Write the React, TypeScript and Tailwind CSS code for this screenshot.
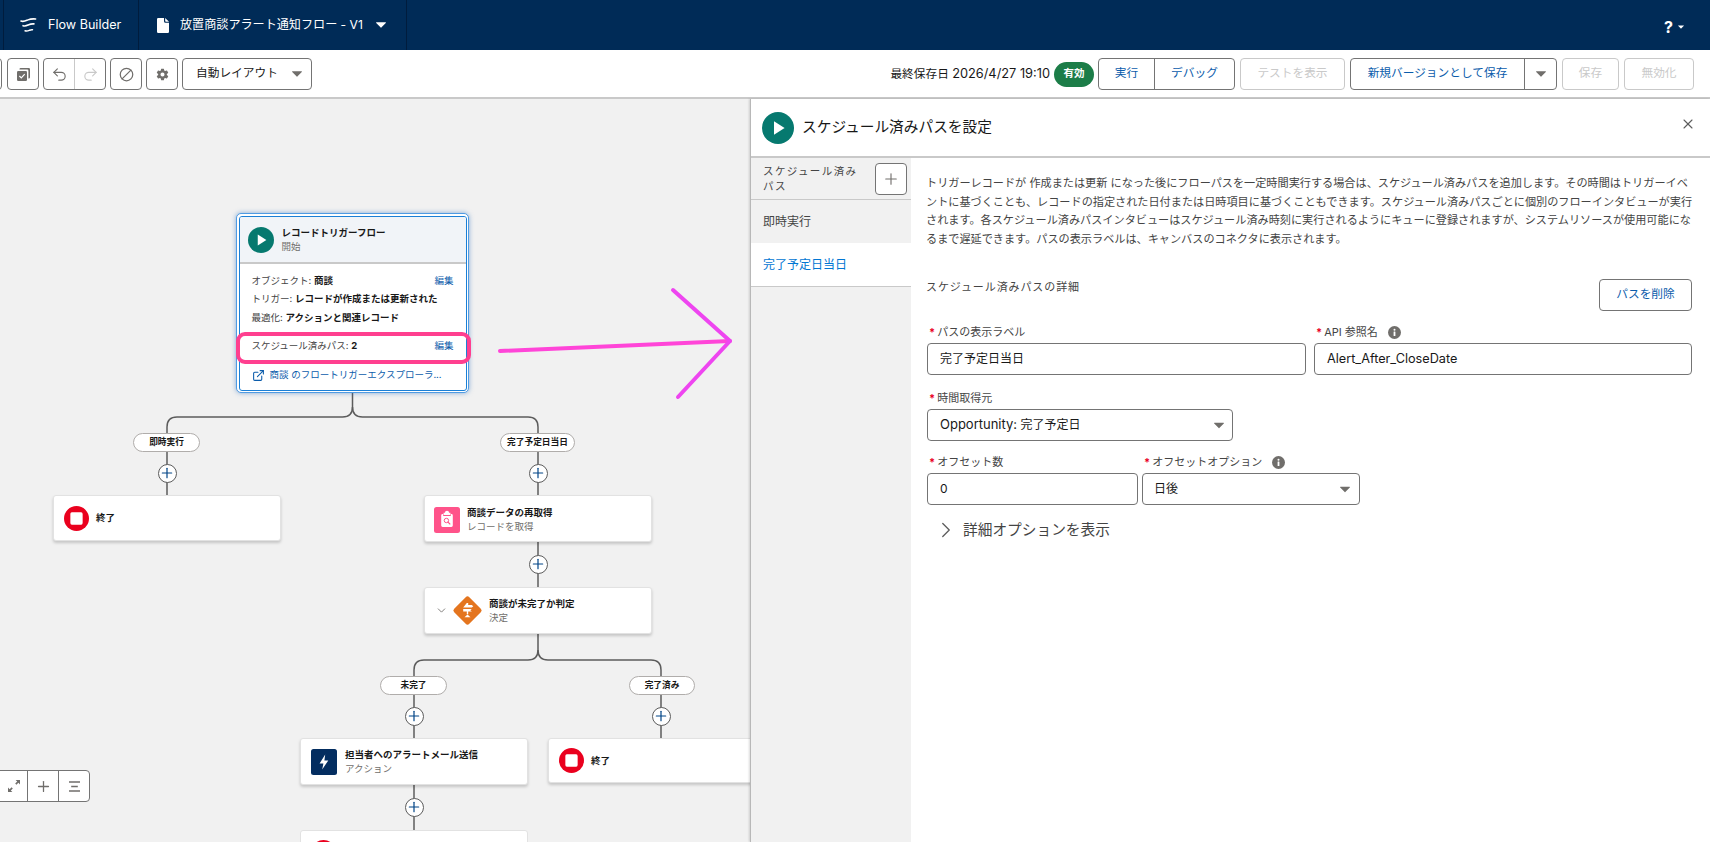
import React from "react";
import { Undo2, Redo2, Ban, Plus, X, ChevronDown, ChevronRight, ExternalLink } from "lucide-react";
import { IoSettingsSharp } from "react-icons/io5";

const Caret = ({ className = "" }: { className?: string }) => (
  <svg viewBox="0 0 10 6" className={className} aria-hidden>
    <path d="M0.5 0.3h9a.4.4 0 0 1 .3.7L5.3 5.6a.4.4 0 0 1-.6 0L.2 1a.4.4 0 0 1 .3-.7z" fill="currentColor" />
  </svg>
);

const PlayBadge = ({ className = "" }: { className?: string }) => (
  <svg viewBox="0 0 32 32" className={className} aria-hidden>
    <circle cx="16" cy="16" r="16" fill="#06796f" />
    <path d="M12 9.2 22.6 16 12 22.8z" fill="#fff" />
  </svg>
);

const EndIcon = () => (
  <svg viewBox="0 0 26 26" className="w-[25px] h-[25px] shrink-0" aria-hidden>
    <circle cx="13" cy="13" r="13" fill="#ea001e" />
    <rect x="6.6" y="6.6" width="12.8" height="12.8" rx="1.6" fill="#fff" />
  </svg>
);

const RecordIcon = () => (
  <svg viewBox="0 0 26 26" className="w-[26px] h-[26px] shrink-0" aria-hidden>
    <rect width="26" height="26" rx="2.5" fill="#ff538a" />
    <path d="M9.6 5.8h1.3a2.1 2.1 0 0 1 4.2 0h1.3v2.1H9.6z" fill="#fff" />
    <path d="M8.6 7h.6v1.9h7.6V7h.6A1.4 1.4 0 0 1 18.8 8.4v10.2a1.4 1.4 0 0 1-1.4 1.4H8.6a1.4 1.4 0 0 1-1.4-1.4V8.4A1.4 1.4 0 0 1 8.6 7z" fill="#fff" />
    <circle cx="12.4" cy="13.5" r="2.2" fill="none" stroke="#ff538a" strokeWidth="1" />
    <path d="m14 15.1 1.9 1.9" stroke="#ff538a" strokeWidth="1.1" strokeLinecap="round" />
  </svg>
);

const DecisionIcon = () => (
  <svg viewBox="0 0 31 31" className="w-[31px] h-[31px] shrink-0" aria-hidden>
    <rect x="4.8" y="4.8" width="21.4" height="21.4" rx="2.6" transform="rotate(45 15.5 15.5)" fill="#e4751f" />
    <path d="M14.8 8h1.4v2h3.6l1.5 1.3-1.5 1.3H11.2zM11.2 14h8.6l-1.5 1.3 1.5 1.3h-3.6v2.6h-1.4v-2.6h-3.6z" fill="#fff" />
    <path d="M15.5 19.6l3 2.6h-6z" fill="#fff" />
  </svg>
);

const ActionIcon = () => (
  <svg viewBox="0 0 26 26" className="w-[26px] h-[26px] shrink-0" aria-hidden>
    <rect width="26" height="26" rx="2.5" fill="#032d60" />
    <path d="M14.2 5.6 8.6 14.4h3.8l-1.2 6.2 6.1-9.2h-3.9z" fill="#fff" />
  </svg>
);

const InfoIcon = () => (
  <svg viewBox="0 0 13 13" className="w-[13px] h-[13px]" aria-hidden>
    <circle cx="6.5" cy="6.5" r="6.5" fill="#706e6b" />
    <rect x="5.6" y="5.6" width="1.8" height="4.4" rx=".3" fill="#fff" />
    <circle cx="6.5" cy="3.8" r="1" fill="#fff" />
  </svg>
);

const AddButton = ({ className }: { className: string }) => (
  <div className={"absolute w-[19px] h-[19px] rounded-full bg-white border-[1.5px] border-[#5c5c5c] flex items-center justify-center " + className}>
    <Plus size={16} strokeWidth={1.8} className="text-[#014486]" />
  </div>
);

const Pill = ({ className, children }: { className: string; children: React.ReactNode }) => (
  <div className={"absolute h-[19px] rounded-full bg-white border border-[#b0adab] flex items-center justify-center text-[8.7px] font-bold text-[#181818] " + className}>
    {children}
  </div>
);

const NodeCard = ({
  className,
  icon,
  title,
  sub,
}: {
  className: string;
  icon: React.ReactNode;
  title: string;
  sub?: string;
}) => (
  <div className={"absolute bg-white rounded-[3px] border border-[#e2e2e2] shadow-[0_2px_3px_rgba(0,0,0,0.18)] flex items-center " + className}>
    {icon}
    <div className="flex flex-col">
      <div className="text-[9.5px] leading-[14px] font-bold text-[#181818]">{title}</div>
      {sub && <div className="text-[9.5px] leading-[14px] text-[#706e6b]">{sub}</div>}
    </div>
  </div>
);

const ToolBtn = ({ className = "", children }: { className?: string; children: React.ReactNode }) => (
  <div className={"h-[32px] flex items-center justify-center border border-[#747474] bg-white " + className}>{children}</div>
);

const Label = ({ children, info }: { children: React.ReactNode; info?: boolean }) => (
  <div className="h-[14px] mb-[4px] flex items-center text-[11px] text-[#444444]">
    <span className="text-[#ea001e] ml-[2px] mr-[2px] font-bold">*</span>
    <span>{children}</span>
    {info && <span className="ml-[10px] flex"><InfoIcon /></span>}
  </div>
);

const Field = ({ className = "", children }: { className?: string; children: React.ReactNode }) => (
  <div className={"h-[32px] rounded-[4px] border border-[#747474] bg-white flex items-center px-[12px] text-[12px] text-[#181818] " + className}>
    {children}
  </div>
);

export default function App() {
  return (
    <div className="w-[1710px] h-[842px] overflow-hidden flex flex-col bg-white font-[Inter,'Noto_Sans_CJK_JP',sans-serif] text-[#181818]">
      {/* Top navigation */}
      <header className="h-[50px] shrink-0 bg-[#002b57] flex items-center text-white">
        <div className="h-full w-[4px] border-r border-[#001c3d]" />
        <div className="h-full w-[135px] border-r border-[#001c3d] flex items-center pl-[16px]">
          <svg viewBox="0 0 18 16" className="w-[17px] h-[15px] mr-[11px]" fill="none" stroke="#fff" strokeLinecap="round" aria-hidden>
            <path d="M1 3.2c3 1.2 5-.2 7.4-1.2 2.4-1 5-1.3 8.2-1" strokeWidth="1.7" />
            <path d="M3.2 8.2c2.6.9 4.2-.2 6-1 1.8-.8 3.4-1.1 5.6-.9" strokeWidth="1.7" />
            <path d="M5.4 13.6c2 .8 3.4 0 4.8-.6 1.2-.5 2.4-.6 3-.5" strokeWidth="1.7" />
          </svg>
          <span className="text-[12.6px] whitespace-nowrap">Flow Builder</span>
        </div>
        <div className="h-full w-[268px] border-r border-[#001c3d] flex items-center pl-[18px]">
          <svg viewBox="0 0 12 15" className="w-[12px] h-[15px] mr-[11px]" aria-hidden>
            <path d="M1.2 0H7v3.2A1.6 1.6 0 0 0 8.6 4.8H12v9A1.2 1.2 0 0 1 10.8 15H1.2A1.2 1.2 0 0 1 0 13.8V1.2A1.2 1.2 0 0 1 1.2 0z" fill="#fff" />
            <path d="M8.2 0 12 3.7H9a.8.8 0 0 1-.8-.8z" fill="#fff" />
          </svg>
          <span className="text-[12.1px] whitespace-nowrap">放置商談アラート通知フロー - V1</span>
          <Caret className="w-[10px] h-[6px] ml-[13px] text-white" />
        </div>
        <div className="ml-auto mr-[26px] mt-[3px] flex items-center">
          <span className="text-[16px] font-bold leading-none">?</span>
          <Caret className="w-[6px] h-[4px] ml-[5px] text-white" />
        </div>
      </header>

      {/* Toolbar */}
      <div className="h-[49px] shrink-0 border-b-2 border-[#c9c9c9] flex items-center text-[11.7px] pt-[1px]">
        <ToolBtn className="w-[32px] -ml-[30px] rounded-[4px]"><span /></ToolBtn>
        <ToolBtn className="w-[32px] ml-[5px] rounded-[4px]">
          <svg viewBox="0 0 13 13" className="w-[13px] h-[13px]" aria-hidden>
            <path d="M3.6 0h8.2A1.2 1.2 0 0 1 13 1.2v8a1.2 1.2 0 0 1-1.2 1.2h-.4V2.8a1.2 1.2 0 0 0-1.2-1.2H2.5v-.5A1.2 1.2 0 0 1 3.6 0z" fill="#706e6b" />
            <rect y="3" width="10" height="10" rx="1.2" fill="#706e6b" />
            <path d="m2.4 8 1.9 1.9 3.4-3.7" stroke="#fff" strokeWidth="1.2" fill="none" />
          </svg>
        </ToolBtn>
        <div className="flex ml-[4px] w-[63px] h-[32px] rounded-[4px] border border-[#747474] overflow-hidden">
          <div className="w-[31px] flex items-center justify-center border-r border-[#c9c9c9]">
            <Undo2 size={17} strokeWidth={1.6} className="text-[#706e6b]" />
          </div>
          <div className="flex-1 flex items-center justify-center">
            <Redo2 size={17} strokeWidth={1.6} className="text-[#c9c9c9]" />
          </div>
        </div>
        <ToolBtn className="w-[32px] ml-[4px] rounded-[4px]">
          <Ban size={15} strokeWidth={2} className="text-[#706e6b] -scale-x-100" />
        </ToolBtn>
        <ToolBtn className="w-[32px] ml-[4px] rounded-[4px]">
          <IoSettingsSharp size={13} className="text-[#706e6b]" />
        </ToolBtn>
        <ToolBtn className="w-[130px] ml-[4px] rounded-[4px] !justify-start pl-[13px]">
          <span className="text-[#181818]">自動レイアウト</span>
          <Caret className="w-[10px] h-[6px] ml-auto mr-[9px] text-[#706e6b]" />
        </ToolBtn>

        <div className="ml-auto pr-[16px] flex items-center">
          <span className="whitespace-nowrap mr-[4px]">最終保存日 <span className="text-[12.8px]">2026/4/27 19:10</span></span>
          <span className="h-[25px] w-[40px] rounded-full bg-[#1c7d48] text-white text-[10.5px] font-bold flex items-center justify-center mr-[4px]">有効</span>
          <div className="flex w-[137px] h-[32px] rounded-[4px] border border-[#747474] text-[#0b5cab]">
            <div className="w-[56px] flex items-center justify-center border-r border-[#747474]">実行</div>
            <div className="flex-1 flex items-center justify-center">デバッグ</div>
          </div>
          <ToolBtn className="w-[105px] ml-[5px] rounded-[4px] !border-[#c9c9c9] text-[#c9c9c9]">テストを表示</ToolBtn>
          <div className="flex w-[207px] ml-[5px] h-[32px] rounded-[4px] border border-[#747474] text-[#0b5cab]">
            <div className="flex-1 flex items-center justify-center border-r border-[#747474]">新規バージョンとして保存</div>
            <div className="w-[31px] flex items-center justify-center">
              <Caret className="w-[10px] h-[6px] text-[#706e6b]" />
            </div>
          </div>
          <ToolBtn className="w-[57px] ml-[5px] rounded-[4px] !border-[#c9c9c9] text-[#c9c9c9]">保存</ToolBtn>
          <ToolBtn className="w-[70px] ml-[5px] rounded-[4px] !border-[#c9c9c9] text-[#c9c9c9]">無効化</ToolBtn>
        </div>
      </div>

      <main className="flex-1 flex min-h-0">
        {/* Canvas */}
        <section className="relative w-[750px] shrink-0 overflow-hidden bg-[#f1f1f1]">
          <svg viewBox="0 0 750 743" className="absolute left-0 top-0 w-[750px] h-[743px]" fill="none" stroke="#5c5c5c" strokeWidth="1.5" aria-hidden>
            <path d="M352.5 294V308Q352.5 318 342.5 318H177Q167 318 167 328V396" />
            <path d="M352.5 308Q352.5 318 362.5 318H528Q538 318 538 328V396" />
            <path d="M538 443V488" />
            <path d="M538 535V551Q538 561 528 561H424Q414 561 414 571V639" />
            <path d="M538 551Q538 561 548 561H651Q661 561 661 571V639" />
            <path d="M414 686V731" />
          </svg>

          {/* Start node */}
          <div className="absolute left-[236px] top-[114px] w-[233px] h-[180px] rounded-[5px] border-[1.5px] border-[#4f9be3] p-[1.5px] bg-white shadow-[0_0_5px_rgba(40,110,190,0.55)]">
            <div className="h-full rounded-[3px] border border-[#1b7fd6] overflow-hidden bg-white flex flex-col">
              <div className="h-[47px] shrink-0 bg-[#f1f4f8] border-b-2 border-[#c9c9c9] flex items-center pl-[8px] pt-[1px]">
                <PlayBadge className="w-[26px] h-[26px] mr-[8px]" />
                <div>
                  <div className="text-[9.5px] leading-[14px] font-bold">レコードトリガーフロー</div>
                  <div className="text-[9.5px] leading-[14px] text-[#706e6b]">開始</div>
                </div>
              </div>
              <div className="pl-[12px] pr-[12px] pt-[8px] text-[9.5px] text-[#444444] leading-[18.5px]">
                <div className="flex justify-between"><span>オブジェクト: <b className="text-[#181818]">商談</b></span><span className="text-[#0b5cab]">編集</span></div>
                <div>トリガー: <b className="text-[#181818]">レコードが作成または更新された</b></div>
                <div>最適化: <b className="text-[#181818]">アクションと関連レコード</b></div>
                <div className="flex justify-between mt-[10px]"><span>スケジュール済みパス: <b className="text-[#181818]">2</b></span><span className="text-[#0b5cab]">編集</span></div>
                <div className="flex items-center mt-[10.5px] text-[#0b5cab] whitespace-nowrap">
                  <ExternalLink size={13} strokeWidth={2} className="mr-[5px] shrink-0" />
                  商談 のフロートリガーエクスプローラ...
                </div>
              </div>
            </div>
          </div>
          <div className="absolute left-[236px] top-[233px] w-[235px] h-[32px] rounded-[9px] border-[4px] border-[#ff3f8f]" />

          <Pill className="left-[133px] top-[334px] w-[67px]">即時実行</Pill>
          <Pill className="left-[500px] top-[334px] w-[75px]">完了予定日当日</Pill>
          <AddButton className="left-[157.5px] top-[364.5px]" />
          <AddButton className="left-[528.5px] top-[364.5px]" />

          <NodeCard className="left-[53px] top-[396px] w-[228px] h-[46px] pl-[10px] gap-[7px]" icon={<EndIcon />} title="終了" />
          <NodeCard className="left-[424px] top-[396px] w-[228px] h-[47px] pl-[9px] pt-[2px] gap-[7px]" icon={<RecordIcon />} title="商談データの再取得" sub="レコードを取得" />
          <AddButton className="left-[528.5px] top-[455.5px]" />
          <NodeCard
            className="left-[424px] top-[488px] w-[228px] h-[47px] pl-[10px] gap-[6px]"
            icon={
              <div className="flex items-center gap-[4px]">
                <ChevronDown size={13} strokeWidth={1.6} className="text-[#706e6b]" />
                <DecisionIcon />
              </div>
            }
            title="商談が未完了か判定"
            sub="決定"
          />
          <Pill className="left-[380px] top-[577px] w-[67px]">未完了</Pill>
          <Pill className="left-[629px] top-[577px] w-[66px]">完了済み</Pill>
          <AddButton className="left-[404.5px] top-[607.5px]" />
          <AddButton className="left-[651.5px] top-[607.5px]" />
          <NodeCard className="left-[300px] top-[639px] w-[228px] h-[47px] pl-[10px] gap-[8px]" icon={<ActionIcon />} title="担当者へのアラートメール送信" sub="アクション" />
          <NodeCard className="left-[548px] top-[639px] w-[240px] h-[45px] pl-[10px] gap-[7px]" icon={<EndIcon />} title="終了" />
          <AddButton className="left-[404.5px] top-[698.5px]" />
          <div className="absolute left-[300px] top-[731px] w-[228px] h-[40px] bg-white rounded-[3px] border border-[#e2e2e2] pl-[10px] pt-[9px]">
            <EndIcon />
          </div>

          {/* Zoom controls */}
          <div className="absolute -left-[4px] top-[671px] w-[94px] h-[32px] rounded-[4px] border border-[#747474] bg-white flex text-[#706e6b]">
            <div className="w-[31px] flex items-center justify-center border-r border-[#747474]">
              <svg viewBox="0 0 14 14" className="w-[14px] h-[14px] ml-[4px]" aria-hidden>
                <path d="M8.6 1h4.4v4.4l-1.6-1.6-2 2-1.2-1.2 2-2zM5.4 13H1V8.6l1.6 1.6 2-2 1.2 1.2-2 2z" fill="currentColor" />
              </svg>
            </div>
            <div className="w-[31px] flex items-center justify-center border-r border-[#747474]">
              <Plus size={17} strokeWidth={1.8} />
            </div>
            <div className="flex-1 flex items-center justify-center">
              <svg viewBox="0 0 14 12" className="w-[13px] h-[11px]" stroke="currentColor" strokeWidth="1.6" aria-hidden>
                <path d="M1 1.2h12M3.4 6h7.2M1 10.8h12" />
              </svg>
            </div>
          </div>

          {/* Annotation arrow */}
          <svg viewBox="0 0 750 743" className="absolute left-0 top-0 w-[750px] h-[743px] pointer-events-none" fill="none" strokeLinecap="round" aria-hidden>
            <path d="M500 252 730 242" stroke="#ff45d8" strokeWidth="4" />
            <path d="M673 191 730 242 678 298" stroke="#ee45f0" strokeWidth="4" strokeLinejoin="round" />
          </svg>
        </section>

        {/* Side panel */}
        <section className="flex-1 min-w-0 flex flex-col border-l border-[#b8b8b8] bg-white shadow-[-1px_0_2px_rgba(0,0,0,0.15)] z-10">
          <div className="h-[59px] shrink-0 border-b-2 border-[#c9c9c9] flex items-center pl-[11px] pr-[14px]">
            <PlayBadge className="w-[32px] h-[32px] mr-[8px]" />
            <h2 className="text-[14.7px] font-normal">スケジュール済みパスを設定</h2>
            <X size={16} strokeWidth={1.6} className="ml-auto text-[#5c5c5c] mb-[7px]" />
          </div>
          <div className="flex-1 flex min-h-0">
            <aside className="w-[160px] shrink-0 bg-[#f1f1f1] flex flex-col">
              <div className="h-[42px] shrink-0 border-b border-[#c9c9c9] flex items-center justify-between pl-[12px] pr-[4px]">
                <span className="w-[104px] text-[10.5px] tracking-[1.4px] leading-[15px] text-[#444444]">スケジュール済みパス</span>
                <div className="w-[32px] h-[32px] bg-white rounded-[4px] border border-[#747474] flex items-center justify-center">
                  <Plus size={18} strokeWidth={1.5} className="text-[#706e6b]" />
                </div>
              </div>
              <div className="h-[43px] shrink-0 flex items-center pl-[12px] text-[12px] text-[#444444]">即時実行</div>
              <div className="h-[44px] shrink-0 flex items-center pl-[12px] text-[12px] text-[#0176d3] bg-white border-b border-[#c9c9c9]">完了予定日当日</div>
            </aside>
            <div className="flex-1 min-w-0 pl-[15px] pr-[18px] pt-[16px]">
              <p className="text-[11.15px] leading-[18.5px] text-[#444444] whitespace-nowrap">
                トリガーレコードが 作成または更新 になった後にフローパスを一定時間実行する場合は、スケジュール済みパスを追加します。その時間はトリガーイベ
                <br />
                ントに基づくことも、レコードの指定された日付または日時項目に基づくこともできます。スケジュール済みパスごとに個別のフローインタビューが実行
                <br />
                されます。各スケジュール済みパスインタビューはスケジュール済み時刻に実行されるようにキューに登録されますが、システムリソースが使用可能にな
                <br />
                るまで遅延できます。パスの表示ラベルは、キャンバスのコネクタに表示されます。
              </p>
              <div className="mt-[31px] flex justify-between items-start">
                <span className="text-[11px] tracking-[0.9px] leading-[16px] text-[#444444]">スケジュール済みパスの詳細</span>
                <div className="w-[93px] h-[32px] rounded-[4px] border border-[#747474] flex items-center justify-center text-[11.7px] text-[#0b5cab]">パスを削除</div>
              </div>
              <div className="pl-[1px]">
                <div className="mt-[14px] flex gap-[8px]">
                  <div className="w-[379px]">
                    <Label>パスの表示ラベル</Label>
                    <Field>完了予定日当日</Field>
                  </div>
                  <div className="flex-1">
                    <Label info>API 参照名</Label>
                    <Field><span className="text-[12.7px]">Alert_After_CloseDate</span></Field>
                  </div>
                </div>
                <div className="mt-[16px] w-[306px]">
                  <Label>時間取得元</Label>
                  <Field className="justify-between pr-[8px]">
                    <span><span className="text-[13px]">Opportunity:</span> 完了予定日</span>
                    <Caret className="w-[10px] h-[7px] text-[#706e6b]" />
                  </Field>
                </div>
                <div className="mt-[14px] flex gap-[4px]">
                  <div className="w-[211px]">
                    <Label>オフセット数</Label>
                    <Field>0</Field>
                  </div>
                  <div className="w-[218px]">
                    <Label info>オフセットオプション</Label>
                    <Field className="justify-between pr-[9px] pl-[11px]">
                      <span>日後</span>
                      <Caret className="w-[10px] h-[7px] text-[#706e6b]" />
                    </Field>
                  </div>
                </div>
                <div className="mt-[15px] h-[20px] flex items-center pl-[11px] text-[14.7px] text-[#444444]">
                  <ChevronRight size={26} strokeWidth={1.2} className="text-[#5c5c5c] -ml-[5px] mr-[4px]" />
                  詳細オプションを表示
                </div>
              </div>
            </div>
          </div>
        </section>
      </main>
    </div>
  );
}
